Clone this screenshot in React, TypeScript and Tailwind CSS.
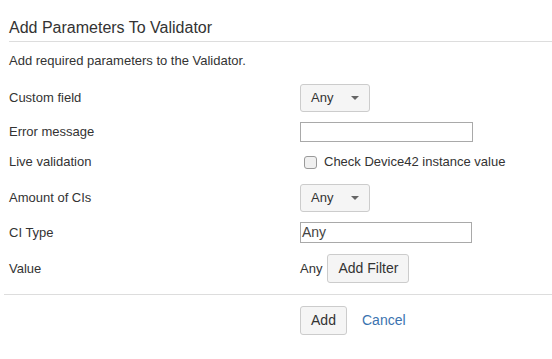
import React from "react";

function Caret() {
  return (
    <svg width="8" height="4" viewBox="0 0 8 4" className="block">
      <path d="M0 0 L8 0 L4 4 Z" fill="#666" />
    </svg>
  );
}

function SelectBtn() {
  return (
    <div className="flex h-[28px] w-[70px] items-center rounded-[3px] border border-[#cccccc] bg-[#f5f5f5] pl-[10px] pr-[10px] text-[13px] text-[#333]">
      <span>Any</span>
      <span className="ml-auto">
        <Caret />
      </span>
    </div>
  );
}

export default function App() {
  return (
    <div
      className="h-[359px] w-[552px] bg-white pl-[9px] text-[#333]"
      style={{ fontFamily: '"Liberation Sans", Arial, sans-serif' }}
    >
      <div className="border-b border-[#dddddd] pt-[18px] pb-[3px] text-[16px] leading-[20px] text-[#333]">
        Add Parameters To Validator
      </div>
      <div className="mt-[10px] text-[13px] leading-[18px]">Add required parameters to the Validator.</div>

      <div className="mt-[14px] flex h-[28px] items-center">
        <div className="w-[291px] text-[13px]">Custom field</div>
        <SelectBtn />
      </div>
      <div className="mt-[10px] flex h-[20px] items-center">
        <div className="w-[291px] text-[13px]">Error message</div>
        <div className="h-[20px] w-[173px] border border-[#a9a9a9] bg-white" />
      </div>
      <div className="mt-[10px] flex h-[20px] items-center">
        <div className="w-[291px] text-[13px]">Live validation</div>
        <div className="ml-[4px] h-[13px] w-[13px] rounded-[3px] border border-[#9a9a9a] bg-[#f0f0f0]" />
        <span className="ml-[7px] text-[13px]">Check Device42 instance value</span>
      </div>
      <div className="mt-[12px] flex h-[28px] items-center">
        <div className="w-[291px] text-[13px]">Amount of CIs</div>
        <SelectBtn />
      </div>
      <div className="mt-[10px] flex h-[21px] items-center">
        <div className="w-[291px] text-[13px]">CI Type</div>
        <div className="flex h-[21px] w-[172px] items-center border border-[#a9a9a9] bg-white px-[1px] text-[14px] text-[#444]">
          Any
        </div>
      </div>
      <div className="mt-[11px] flex h-[29px] items-center">
        <div className="w-[291px] text-[13px]">Value</div>
        <span className="text-[13px]">Any</span>
        <div className="ml-[5px] flex h-[29px] w-[82px] items-center justify-center rounded-[3px] border border-[#cccccc] bg-[#f5f5f5] text-[14px]">
          Add Filter
        </div>
      </div>

      <div className="-ml-[5px] mt-[11px] border-t border-[#dddddd]" />

      <div className="mt-[11px] flex h-[29px] items-center pl-[291px]">
        <div className="flex h-[29px] w-[47px] items-center justify-center rounded-[3px] border border-[#cccccc] bg-[#f5f5f5] text-[14px]">
          Add
        </div>
        <span className="ml-[15px] text-[14px] text-[#3b73af]">Cancel</span>
      </div>
    </div>
  );
}
